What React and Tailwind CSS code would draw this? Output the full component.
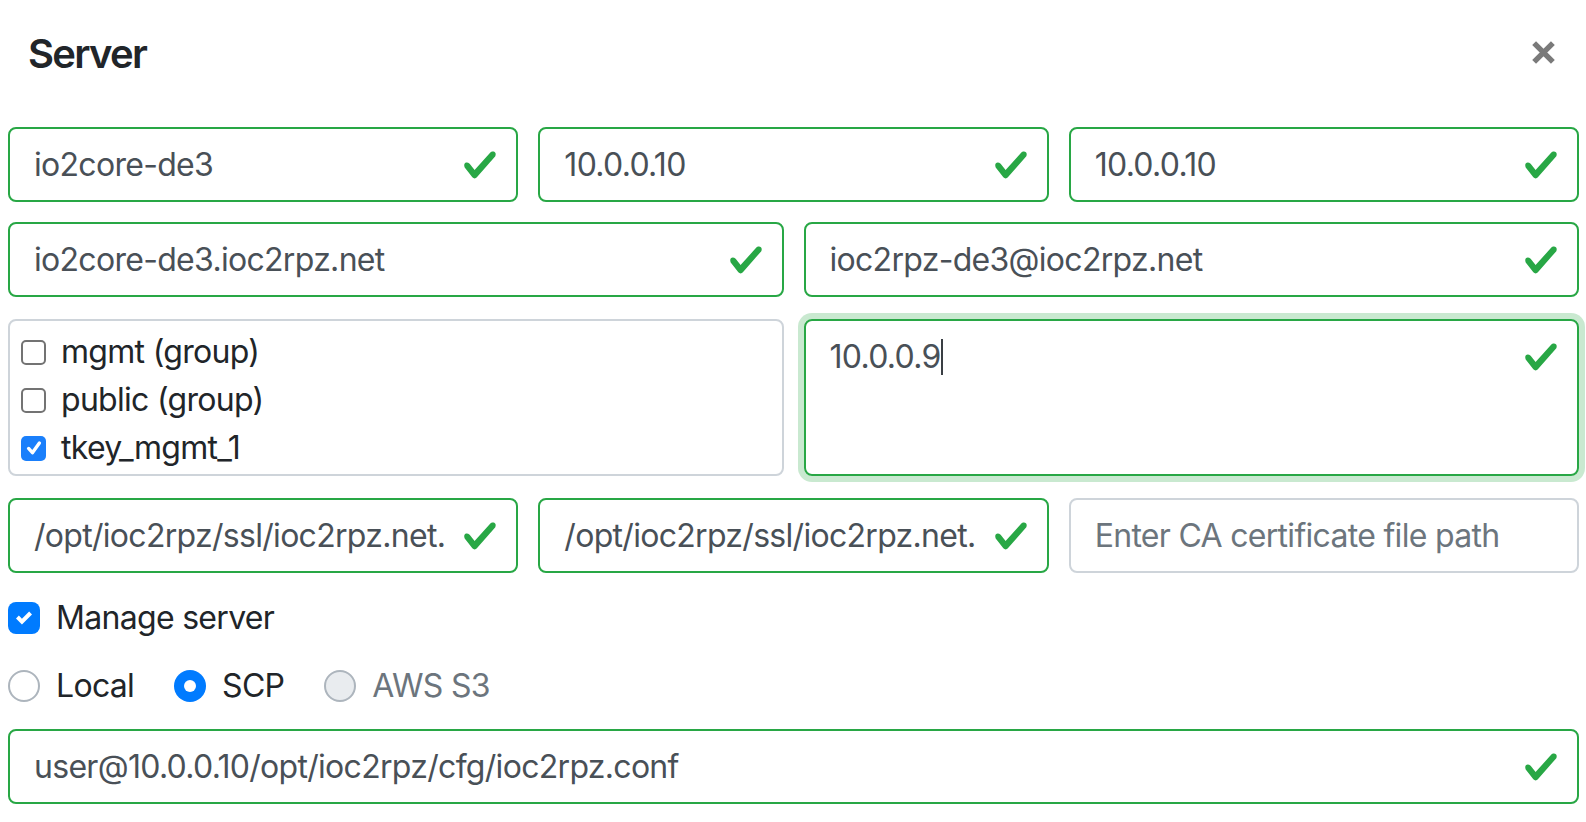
import React from "react";

const GREEN = "#28a745";

function ValidCheck() {
  return (
    <svg width="36" height="36" viewBox="0 0 8 8" aria-hidden="true">
      <path
        fill={GREEN}
        d="M2.3 6.73L.6 4.53c-.4-1.04.46-1.4 1.1-.8l1.1 1.4 3.4-3.8c.6-.63 1.6-.27 1.2.7l-4 4.6c-.43.5-.8.4-1.1.1z"
      />
    </svg>
  );
}

function Field({ value, placeholder, valid = true }) {
  return (
    <div
      className={`relative h-[75px] rounded-[8px] border-2 bg-white flex items-center pl-[24px] ${
        valid ? "border-[#28a745] pr-[71px]" : "border-[#ced4da] pr-[24px]"
      }`}
    >
      <div
        className={`flex-1 min-w-0 overflow-hidden whitespace-nowrap text-[32px] leading-[48px] tracking-[-0.7px] ${
          value ? "text-[#495057]" : "text-[#6c757d]"
        }`}
      >
        {value || placeholder}
      </div>
      {valid && (
        <div className="absolute right-[18px] top-1/2 -translate-y-1/2 flex">
          <ValidCheck />
        </div>
      )}
    </div>
  );
}

function NativeBox({ checked }) {
  return checked ? (
    <div className="w-[25px] h-[25px] rounded-[5px] bg-[#1a7ffb] flex items-center justify-center">
      <svg width="18" height="18" viewBox="0 0 16 16" aria-hidden="true">
        <path d="M3.2 8.4 L6.6 12.2 L12.8 3.6" fill="none" stroke="#fff" strokeWidth="3" strokeLinecap="round" strokeLinejoin="round" />
      </svg>
    </div>
  ) : (
    <div className="w-[25px] h-[25px] rounded-[5px] border-2 border-[#737373] bg-white" />
  );
}

function NativeCheckRow({ label, checked }) {
  return (
    <div className="flex items-center h-[48px]">
      <NativeBox checked={checked} />
      <span className="ml-[15px] text-[32px] leading-[48px] tracking-[-0.7px] text-[#212529]">{label}</span>
    </div>
  );
}

function Radio({ label, checked, disabled }) {
  return (
    <div className="flex items-center h-[48px]">
      {checked ? (
        <div className="w-[32px] h-[32px] rounded-full bg-[#007bff] flex items-center justify-center">
          <div className="w-[12px] h-[12px] rounded-full bg-white" />
        </div>
      ) : (
        <div
          className={`w-[32px] h-[32px] rounded-full border-2 border-[#adb5bd] ${
            disabled ? "bg-[#e9ecef]" : "bg-white"
          }`}
        />
      )}
      <span
        className={`ml-[16px] text-[32px] leading-[48px] tracking-[-0.7px] ${
          disabled ? "text-[#6c757d]" : "text-[#212529]"
        }`}
      >
        {label}
      </span>
    </div>
  );
}

export default function App() {
  return (
    <div className="w-[1586px] h-[822px] bg-white overflow-hidden font-['Inter','Liberation_Sans',sans-serif]">
      {/* header */}
      <div className="flex items-center justify-between pt-[24px] pl-[28px] pr-[30px]">
        <h5 className="text-[40px] leading-[60px] font-semibold tracking-[-1.7px] text-[#212529]">Server</h5>
        <button className="flex -translate-y-[2px]" aria-label="Close">
          <svg width="25" height="25" viewBox="0 0 24 24" aria-hidden="true">
            <path d="M3 3 L21 21 M21 3 L3 21" stroke="#7a7a7a" strokeWidth="5.2" strokeLinecap="butt" />
          </svg>
        </button>
      </div>

      {/* body */}
      <div className="pl-[8px] pr-[7px] mt-[43px]">
        <div className="grid grid-cols-3 gap-x-[20px]">
          <Field value="io2core-de3" />
          <Field value="10.0.0.10" />
          <Field value="10.0.0.10" />
        </div>

        <div className="grid grid-cols-2 gap-x-[20px] mt-[20px]">
          <Field value="io2core-de3.ioc2rpz.net" />
          <Field value="ioc2rpz-de3@ioc2rpz.net" />
        </div>

        <div className="grid grid-cols-2 gap-x-[20px] mt-[22px]">
          <div className="h-[157px] rounded-[8px] border-2 border-[#ced4da] pt-[7px] pl-[11px]">
            <NativeCheckRow label="mgmt (group)" />
            <NativeCheckRow label="public (group)" />
            <NativeCheckRow label="tkey_mgmt_1" checked />
          </div>
          <div className="relative h-[157px] rounded-[8px] border-2 border-[#28a745] shadow-[0_0_0_6px_rgba(40,167,69,0.25)] pt-[12px] pl-[24px] pr-[72px]">
            <div className="flex items-center text-[32px] leading-[48px] tracking-[-0.7px] text-[#495057]">
              <span>10.0.0.9</span>
              <span className="inline-block w-[2px] h-[36px] bg-[#3a3f44]" />
            </div>
            <div className="absolute right-[18px] top-[18px] flex">
              <ValidCheck />
            </div>
          </div>
        </div>

        <div className="grid grid-cols-3 gap-x-[20px] mt-[22px]">
          <Field value="/opt/ioc2rpz/ssl/ioc2rpz.net.crt" />
          <Field value="/opt/ioc2rpz/ssl/ioc2rpz.net.key" />
          <Field placeholder="Enter CA certificate file path" valid={false} />
        </div>

        {/* manage server */}
        <div className="flex items-center h-[48px] mt-[21px]">
          <div className="w-[32px] h-[32px] rounded-[8px] bg-[#007bff] flex items-center justify-center">
            <svg width="16" height="16" viewBox="0 0 8 8" aria-hidden="true">
              <path fill="#fff" d="M6.564.75l-3.59 3.612-1.538-1.55L0 4.26 2.974 7.25 8 2.193z" />
            </svg>
          </div>
          <span className="ml-[16px] text-[32px] leading-[48px] tracking-[-0.7px] text-[#212529]">Manage server</span>
        </div>

        {/* radios */}
        <div className="flex items-center gap-x-[40px] mt-[20px]">
          <Radio label="Local" />
          <Radio label="SCP" checked />
          <Radio label="AWS S3" disabled />
        </div>

        <div className="mt-[19px]">
          <Field value="user@10.0.0.10/opt/ioc2rpz/cfg/ioc2rpz.conf" />
        </div>
      </div>
    </div>
  );
}
